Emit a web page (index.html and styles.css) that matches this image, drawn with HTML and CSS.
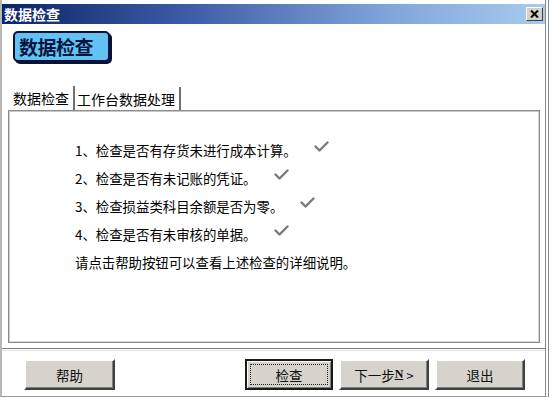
FILE: index.html
```html
<!DOCTYPE html>
<html lang="zh-CN">
<head>
<meta charset="utf-8">
<title>数据检查</title>
<link rel="stylesheet" href="styles.css">
</head>
<body>
<div class="window">
  <div class="titlebar">
    <span class="title">数据检查</span>
    <span class="close">
      <svg width="9" height="8" viewBox="0 0 9 8"><path d="M1 0.5 L8 7.5 M8 0.5 L1 7.5" stroke="#000" stroke-width="2"/></svg>
    </span>
  </div>
  <div class="header">
    <div class="badge">数据检查</div>
  </div>
  <div class="tabs">
    <div class="tab active">数据检查</div>
    <div class="tab second">工作台数据处理</div>
  </div>
  <div class="panel">
    <div class="line"><span>1、检查是否有存货未进行成本计算。</span><svg class="check" width="15" height="12" viewBox="0 0 15 12"><path d="M1.5 5.5 L5.5 9.5 L13.5 1.5" fill="none" stroke="#7a7a7a" stroke-width="2.4" stroke-linecap="round" stroke-linejoin="round"/></svg></div>
    <div class="line"><span>2、检查是否有未记账的凭证。</span><svg class="check" width="15" height="12" viewBox="0 0 15 12"><path d="M1.5 5.5 L5.5 9.5 L13.5 1.5" fill="none" stroke="#7a7a7a" stroke-width="2.4" stroke-linecap="round" stroke-linejoin="round"/></svg></div>
    <div class="line"><span>3、检查损益类科目余额是否为零。</span><svg class="check" width="15" height="12" viewBox="0 0 15 12"><path d="M1.5 5.5 L5.5 9.5 L13.5 1.5" fill="none" stroke="#7a7a7a" stroke-width="2.4" stroke-linecap="round" stroke-linejoin="round"/></svg></div>
    <div class="line"><span>4、检查是否有未审核的单据。</span><svg class="check" width="15" height="12" viewBox="0 0 15 12"><path d="M1.5 5.5 L5.5 9.5 L13.5 1.5" fill="none" stroke="#7a7a7a" stroke-width="2.4" stroke-linecap="round" stroke-linejoin="round"/></svg></div>
    <div class="line"><span>请点击帮助按钮可以查看上述检查的详细说明。</span></div>
  </div>
  <div class="separator"></div>
  <div class="btnrow">
    <button class="btn help">帮助</button>
    <div class="group">
      <button class="btn default"><span class="focus">检查</span></button>
      <button class="btn">下一步<u class="mn">N</u>&nbsp;&gt;</button>
      <button class="btn">退出</button>
    </div>
  </div>
</div>
</body>
</html>
```

FILE: styles.css
```css
html, body {
  margin: 0;
  padding: 0;
  background: #ffffff;
}
body {
  font-family: "Noto Sans CJK SC", "Noto Sans", sans-serif;
  color: #000;
}
.window {
  box-sizing: border-box;
  width: 549px;
  height: 397px;
  padding-top: 4px;
  border-left: 2px solid #b8b8b8;
  border-right: 4px double #8a8a8a;
  border-bottom: 1px solid #9a9a9a;
  background: #fff;
}
.titlebar {
  height: 20px;
  display: flex;
  align-items: center;
  justify-content: space-between;
  background: linear-gradient(to right, #0c2468 0%, #3f5ea8 35%, #7ea3d8 70%, #a9cbf0 100%);
  padding: 0 2px 0 2px;
}
.title {
  color: #fff;
  font-weight: bold;
  font-size: 14px;
  line-height: 20px;
}
.close {
  box-sizing: border-box;
  width: 17px;
  height: 14px;
  background: #d4d0c8;
  border: 1px solid;
  border-color: #fff #404040 #404040 #fff;
  display: flex;
  align-items: center;
  justify-content: center;
}
.header {
  height: 62px;
  padding-left: 11px;
  padding-top: 7px;
  box-sizing: border-box;
}
.badge {
  display: inline-block;
  box-sizing: border-box;
  width: 97px;
  height: 31px;
  background: #62c3f2;
  border: 2px solid #0b1238;
  border-radius: 5px;
  box-shadow: 2px 2px 0 #0b1238;
  color: #0a1440;
  font-weight: bold;
  font-size: 19px;
  line-height: 27px;
  padding-left: 4px;
  letter-spacing: -0.5px;
}
.tabs {
  display: flex;
  padding-left: 6px;
  height: 24px;
  align-items: flex-end;
}
.tab {
  box-sizing: border-box;
  height: 23px;
  font-size: 14px;
  line-height: 24px;
  padding: 0 4px 0 2px;
  border-right: 2px solid #707070;
}
.tab.active {
  width: 67px;
  height: 24px;
  padding-left: 4px;
  border-left: 1px solid #ffffff;
}
.tab.second {
  width: 106px;
}
.panel {
  box-sizing: border-box;
  margin-left: 6px;
  width: 532px;
  height: 233px;
  border: 1px solid #8c8c8c;
  box-shadow: inset 1px 1px 0 #c8c8c8, inset -1px -1px 0 #d8d8d8;
  padding: 25px 0 0 66px;
  font-size: 13.4px;
}
.line {
  display: flex;
  align-items: center;
  height: 28px;
  line-height: 28px;
}
.check {
  margin-left: 17px;
  margin-top: -6px;
}
.separator {
  margin-top: 5px;
  height: 0;
  border-top: 1px solid #808080;
  border-bottom: 1px solid #ffffff;
  box-shadow: 0 1px 0 #e0e0e0;
}
.btnrow {
  display: flex;
  padding: 9px 20px 0 22px;
  align-items: flex-start;
}
.group {
  margin-left: auto;
  display: flex;
  gap: 6px;
}
.btn {
  box-sizing: border-box;
  width: 90px;
  height: 31px;
  background: #d6d3cc;
  border: 2px solid;
  border-color: #ffffff #404040 #404040 #ffffff;
  box-shadow: inset -1px -1px 0 #808080;
  font-family: "Noto Sans CJK SC", "Noto Sans", sans-serif;
  font-size: 13.5px;
  color: #111;
  padding: 0;
  display: flex;
  align-items: center;
  justify-content: center;
}
.btn.help {
  width: 91px;
}
.btn.default {
  width: 88px;
  border: 2px solid #1a1a1a;
  box-shadow: inset 1px 1px 0 #ffffff, inset -1px -1px 0 #808080;
}
.focus {
  box-sizing: border-box;
  width: 78px;
  height: 21px;
  border: 1px dotted #222;
  display: flex;
  align-items: center;
  justify-content: center;
}
.mn {
  font-family: "Liberation Serif", serif;
  font-weight: bold;
  font-size: 12px;
}
```
